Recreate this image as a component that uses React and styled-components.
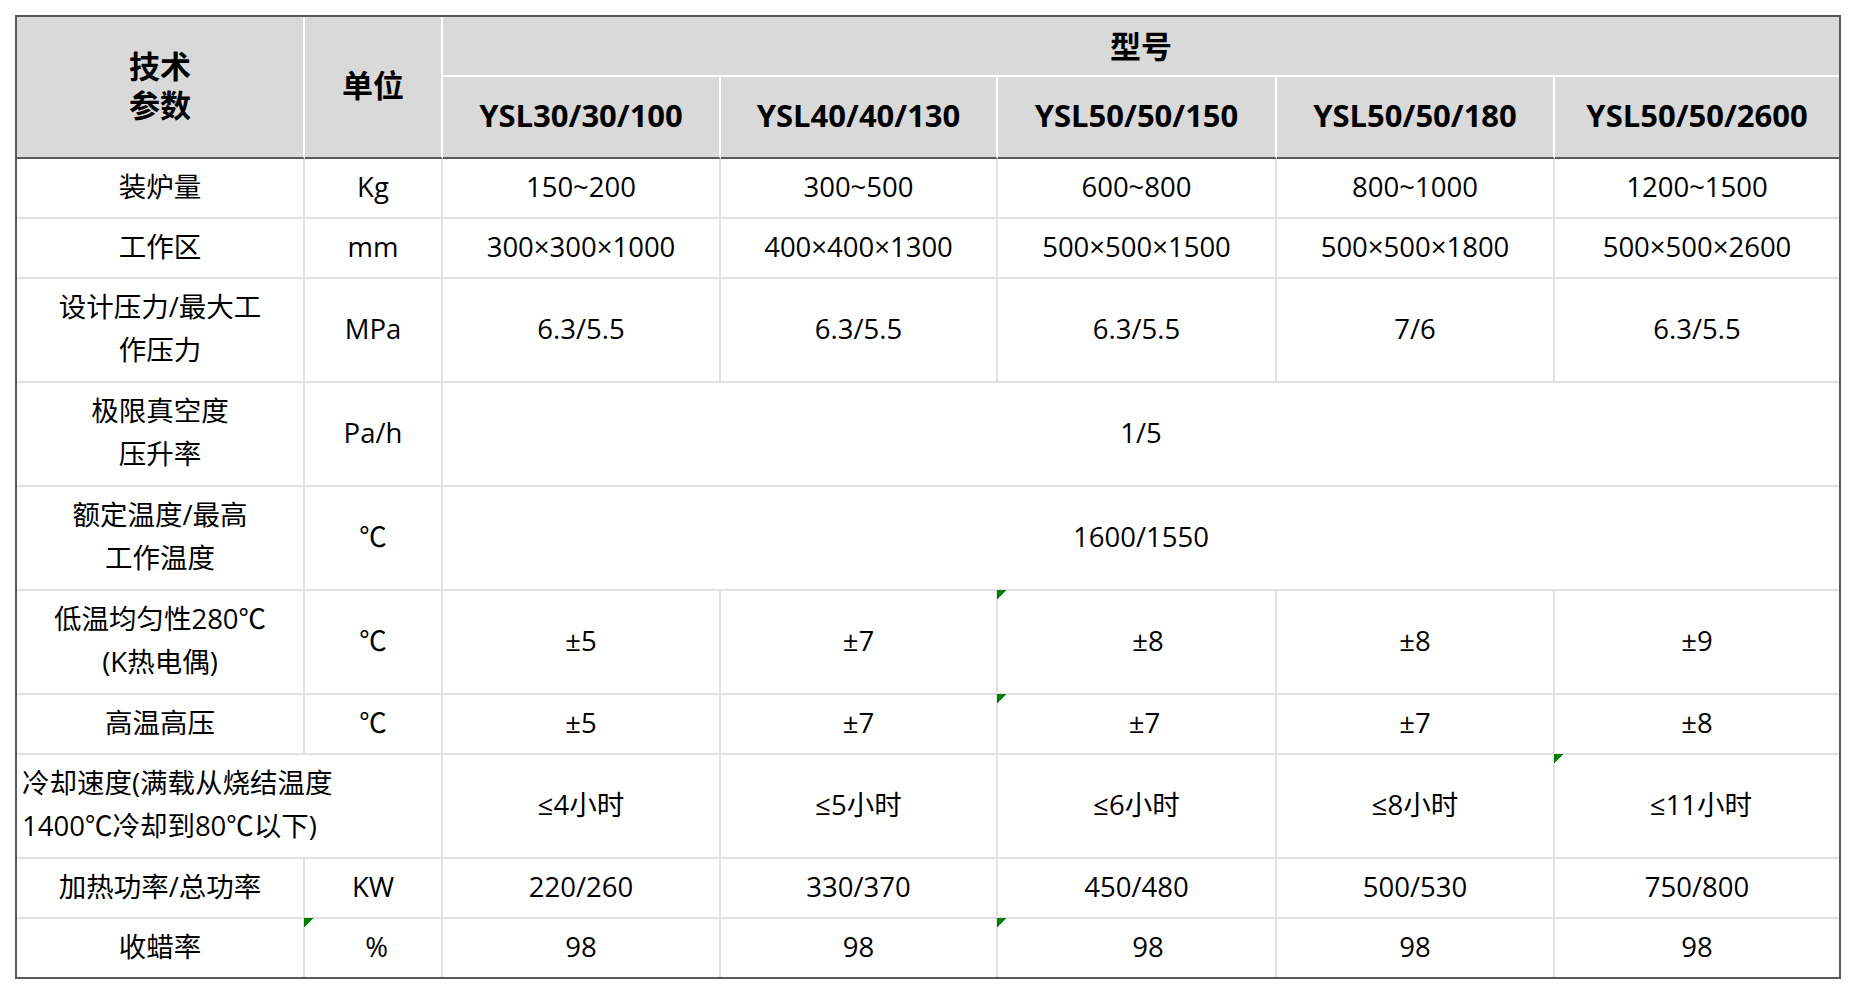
import React from "react";
import styled, { createGlobalStyle, css } from "styled-components";

const Color = {
  frame: "#595959",
  grid: "#e1e1e1",
  head: "#d9d9d9",
  text: "#000000",
  mark: "#008000",
};

const GlobalStyle = createGlobalStyle`
  html, body {
    margin: 0;
    background: #ffffff;
  }
  *, *::before, *::after {
    box-sizing: border-box;
  }
`;

const Page = styled.div`
  padding: 15px 0 0 15px;
  font-family: "Open Sans", "Noto Sans CJK SC", sans-serif;
  color: ${Color.text};
`;

const Sheet = styled.div`
  display: grid;
  grid-template-columns: 288px 138px 278px 277px 279px 278px 284px;
  grid-template-rows: 60px 82px 60px 60px 104px 104px 104px 104px 60px 104px 60px 58px;
  width: max-content;
  border: 2px solid ${Color.frame};
`;

const cellBase = css`
  position: relative;
  display: flex;
  align-items: center;
  justify-content: ${({ $align }) => ($align === "left" ? "flex-start" : "center")};
  text-align: ${({ $align }) => $align || "center"};
  grid-column: span ${({ $cols }) => $cols || 1};
  grid-row: span ${({ $rows }) => $rows || 1};
  border-right: ${({ $lastCol }) => ($lastCol ? "none" : "2px solid")};
  border-bottom: ${({ $lastRow }) => ($lastRow ? "none" : "2px solid")};
`;

const HeadCell = styled.div`
  ${cellBase};
  background: ${Color.head};
  border-color: #ffffff;
  border-bottom-color: ${({ $base }) => ($base ? Color.frame : "#ffffff")};
  font-size: 31px;
  font-weight: bold;
  line-height: 39px;
  padding-bottom: ${({ $base }) => ($base ? 3 : 0)}px;
`;

const Cell = styled.div`
  ${cellBase};
  border-color: ${Color.grid};
  font-size: 27.5px;
  line-height: 43px;
  padding-bottom: 3.5px;
  padding-left: ${({ $shift, $align }) => ($align === "left" ? 5 : ($shift || 0) * 2)}px;
`;

const Mark = styled.svg`
  position: absolute;
  top: -1px;
  left: -1px;
  width: 9px;
  height: 9px;
`;

const Flag = () => (
  <Mark viewBox="0 0 9 9">
    <path d="M0 0H9V1H8V2H7V3H6V4H5V5H4V6H3V7H2V8H1V9H0Z" fill={Color.mark} />
  </Mark>
);

const models = ["YSL30/30/100", "YSL40/40/130", "YSL50/50/150", "YSL50/50/180", "YSL50/50/2600"];

// flags: index in values that carries the green corner mark, with its text shift
const rows = [
  { label: "装炉量", unit: "Kg", values: ["150~200", "300~500", "600~800", "800~1000", "1200~1500"] },
  { label: "工作区", unit: "mm", values: ["300×300×1000", "400×400×1300", "500×500×1500", "500×500×1800", "500×500×2600"] },
  { label: ["设计压力/最大工", "作压力"], unit: "MPa", values: ["6.3/5.5", "6.3/5.5", "6.3/5.5", "7/6", "6.3/5.5"] },
  { label: ["极限真空度", "压升率"], unit: "Pa/h", merged: "1/5" },
  { label: ["额定温度/最高", "工作温度"], unit: "℃", merged: "1600/1550" },
  { label: ["低温均匀性280℃", "(K热电偶)"], unit: "℃", values: ["±5", "±7", "±8", "±8", "±9"], flags: { 2: 11.5 } },
  { label: "高温高压", unit: "℃", values: ["±5", "±7", "±7", "±7", "±8"], flags: { 2: 8 } },
  { label: ["冷却速度(满载从烧结温度", "1400℃冷却到80℃以下)"], wide: true, values: ["≤4小时", "≤5小时", "≤6小时", "≤8小时", "≤11小时"], flags: { 4: 4 } },
  { label: "加热功率/总功率", unit: "KW", values: ["220/260", "330/370", "450/480", "500/530", "750/800"] },
  { label: "收蜡率", unit: "%", unitFlag: 3.5, values: ["98", "98", "98", "98", "98"], flags: { 2: 11.5 } },
];

const Lines = ({ text }) =>
  Array.isArray(text) ? (
    <span>
      {text.map((t, i) => (
        <React.Fragment key={i}>
          {i > 0 && <br />}
          {t}
        </React.Fragment>
      ))}
    </span>
  ) : (
    <span>{text}</span>
  );

const Row = ({ row, last }) => {
  const flags = row.flags || {};
  return (
    <>
      {row.wide ? (
        <Cell $cols={2} $align="left" $lastRow={last}>
          <Lines text={row.label} />
        </Cell>
      ) : (
        <>
          <Cell $lastRow={last}>
            <Lines text={row.label} />
          </Cell>
          <Cell $lastRow={last} $shift={row.unitFlag}>
            {row.unitFlag && <Flag />}
            {row.unit}
          </Cell>
        </>
      )}
      {row.merged ? (
        <Cell $cols={5} $lastCol $lastRow={last}>
          {row.merged}
        </Cell>
      ) : (
        row.values.map((v, i) => (
          <Cell key={i} $lastCol={i === 4} $lastRow={last} $shift={flags[i]}>
            {flags[i] !== undefined && <Flag />}
            {v}
          </Cell>
        ))
      )}
    </>
  );
};

export default function App() {
  return (
    <Page>
      <GlobalStyle />
      <Sheet>
        <HeadCell $rows={2} $base>
          <Lines text={["技术", "参数"]} />
        </HeadCell>
        <HeadCell $rows={2} $base>
          单位
        </HeadCell>
        <HeadCell $cols={5} $lastCol>
          型号
        </HeadCell>
        {models.map((m, i) => (
          <HeadCell key={m} $base $lastCol={i === models.length - 1}>
            {m}
          </HeadCell>
        ))}
        {rows.map((row, i) => (
          <Row key={i} row={row} last={i === rows.length - 1} />
        ))}
      </Sheet>
    </Page>
  );
}
